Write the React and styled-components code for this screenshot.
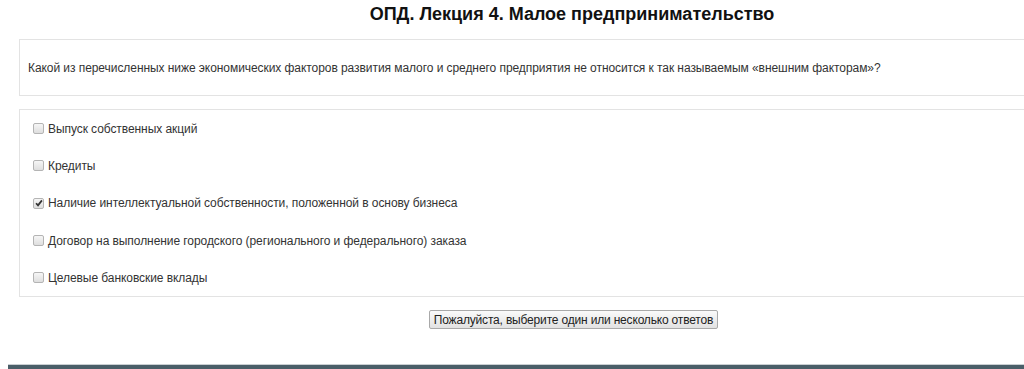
import styled, { createGlobalStyle } from "styled-components";

const GlobalStyle = createGlobalStyle`
  html, body {
    margin: 0;
    padding: 0;
    overflow: hidden;
    background: #fff;
  }
  body {
    font-family: "Liberation Sans", Arial, sans-serif;
    color: #333;
  }
`;

const Page = styled.div`
  width: 1117px;
  padding-left: 8px;
`;

const Content = styled.div`
  padding-left: 11px;
`;

const Title = styled.h2`
  margin: 0;
  padding-top: 4px;
  height: 35px;
  font-size: 18px;
  font-weight: bold;
  color: #111;
  text-align: center;
  line-height: 20px;
`;

const Panel = styled.div`
  border: 1px solid #e3e3e3;
  margin-bottom: ${(p) => p.$gap || 0}px;
`;

const Question = styled.div`
  height: 55px;
  display: flex;
  align-items: center;
  padding-left: 8px;
  font-size: 12px;
  letter-spacing: -0.065px;
`;

const Options = styled.div`
  padding: 0 0 0 13px;
  display: flex;
  flex-direction: column;
`;

const Option = styled.label`
  height: 37.3px;
  display: flex;
  align-items: center;
  gap: 4px;
  font-size: 12px;
  letter-spacing: -0.07px;
  color: #333;
`;

const Box = styled.span`
  width: 9px;
  height: 9px;
  border: 1px solid #b4b4b4;
  border-radius: 2px;
  background: linear-gradient(#f6f6f6, #dedede);
  display: inline-flex;
  align-items: center;
  justify-content: center;
  flex-shrink: 0;
`;

const Actions = styled.div`
  display: flex;
  justify-content: center;
  padding: 13px 0 0 3px;
  height: 67px;
  box-sizing: border-box;
`;

const Button = styled.button`
  height: 19px;
  padding: 0 4px;
  white-space: nowrap;
  font-family: "Liberation Sans", Arial, sans-serif;
  font-size: 12px;
  letter-spacing: -0.18px;
  color: #222;
  border: 1px solid #a9a9a9;
  border-radius: 2px;
  background: linear-gradient(#fafafa, #e2e2e2);
`;

const Footer = styled.div`
  height: 6px;
  background: #4a5e68;
  border-top: 1px solid #c9cfd2;
`;

const Check = () => (
  <svg width="8" height="8" viewBox="0 0 9 9">
    <path d="M1.2 4.8 L3.4 7.2 L7.8 1.6" fill="none" stroke="#333" strokeWidth="2" />
  </svg>
);

const answers = [
  { text: "Выпуск собственных акций" },
  { text: "Кредиты" },
  { text: "Наличие интеллектуальной собственности, положенной в основу бизнеса", checked: true },
  { text: "Договор на выполнение городского (регионального и федерального) заказа" },
  { text: "Целевые банковские вклады" },
];

export default function App() {
  return (
    <Page>
      <GlobalStyle />
      <Content>
        <Title>ОПД. Лекция 4. Малое предпринимательство</Title>
        <Panel $gap={13}>
          <Question>
            Какой из перечисленных ниже экономических факторов развития малого и среднего предприятия не относится к так называемым «внешним факторам»?
          </Question>
        </Panel>
        <Panel>
          <Options>
            {answers.map((a) => (
              <Option key={a.text}>
                <Box>{a.checked && <Check />}</Box>
                {a.text}
              </Option>
            ))}
          </Options>
        </Panel>
        <Actions>
          <Button>Пожалуйста, выберите один или несколько ответов</Button>
        </Actions>
      </Content>
      <Footer />
    </Page>
  );
}
